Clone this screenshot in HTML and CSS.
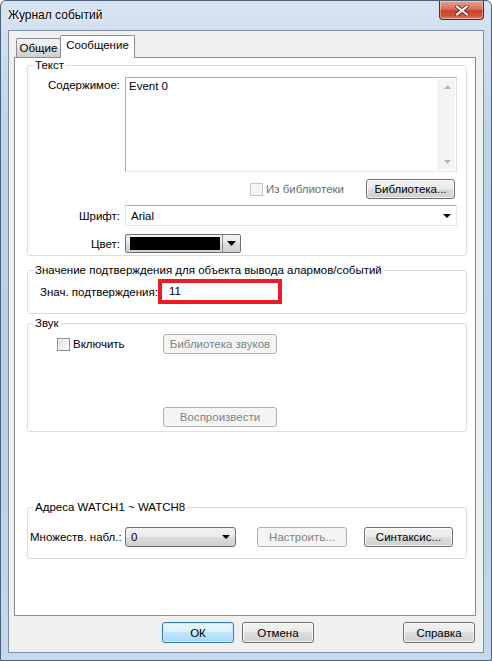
FILE: index.html
```html
<!DOCTYPE html>
<html lang="ru">
<head>
<meta charset="utf-8">
<title>Журнал событий</title>
<link rel="stylesheet" href="styles.css">
</head>
<body>
<div class="window">
  <div class="titlebar">
    <span class="title">Журнал событий</span>
    <div class="close">
      <svg width="14" height="11" viewBox="0 0 14 11"><path d="M2 1.5 L12 9.5 M12 1.5 L2 9.5" stroke="#5a1d12" stroke-width="3.6" stroke-linecap="square"/><path d="M2 1.5 L12 9.5 M12 1.5 L2 9.5" stroke="#fff" stroke-width="2.2" stroke-linecap="square"/></svg>
    </div>
  </div>
  <div class="client">
    <div class="tabs">
      <div class="tab">Общие</div>
      <div class="tab active">Сообщение</div>
    </div>
    <div class="page">
      <fieldset class="group g-text">
        <legend>Текст</legend>
        <div class="gbody">
          <div class="row row-content">
            <label class="lbl lbl-top">Содержимое:</label>
            <div class="textarea">
              <div class="ta-text">Event 0</div>
              <div class="vscroll">
                <svg width="7" height="4" viewBox="0 0 7 4"><path d="M0 4 L3.5 0 L7 4Z" fill="#b5b5b5"/></svg>
                <svg width="7" height="4" viewBox="0 0 7 4"><path d="M0 0 L3.5 4 L7 0Z" fill="#b5b5b5"/></svg>
              </div>
            </div>
          </div>
          <div class="row row-lib">
            <span class="check disabled"><span class="box"></span>Из библиотеки</span>
            <button class="btn btn-lib">Библиотека...</button>
          </div>
          <div class="row row-font">
            <label class="lbl">Шрифт:</label>
            <div class="select white">
              <span>Arial</span>
              <svg width="8" height="4" viewBox="0 0 8 4"><path d="M0 0 L8 0 L4 4Z" fill="#000"/></svg>
            </div>
          </div>
          <div class="row row-color">
            <label class="lbl">Цвет:</label>
            <div class="colorpick">
              <span class="swatch"></span>
              <span class="cp-arrow"><svg width="9" height="5" viewBox="0 0 9 5"><path d="M0 0 L9 0 L4.5 5Z" fill="#000"/></svg></span>
            </div>
          </div>
        </div>
      </fieldset>

      <fieldset class="group g-confirm">
        <legend>Значение подтверждения для объекта вывода алармов/событий</legend>
        <div class="gbody row">
          <label class="lbl-confirm">Знач. подтверждения:</label>
          <div class="redinput">11</div>
        </div>
      </fieldset>

      <fieldset class="group g-sound">
        <legend>Звук</legend>
        <div class="gbody sound-grid">
          <span class="check"><span class="box"></span>Включить</span>
          <button class="btn disabled btn-snd" disabled>Библиотека звуков</button>
          <span></span>
          <button class="btn disabled btn-play" disabled>Воспроизвести</button>
        </div>
      </fieldset>

      <fieldset class="group g-watch">
        <legend>Адреса WATCH1 ~ WATCH8</legend>
        <div class="gbody row">
          <label class="lbl-watch">Множеств. набл.:</label>
          <div class="select grey">
            <span>0</span>
            <svg width="8" height="4" viewBox="0 0 8 4"><path d="M0 0 L8 0 L4 4Z" fill="#000"/></svg>
          </div>
          <button class="btn disabled btn-setup" disabled>Настроить...</button>
          <button class="btn btn-syntax">Синтаксис...</button>
        </div>
      </fieldset>
    </div>
    <div class="buttons">
      <button class="btn btn-dlg default">ОК</button>
      <button class="btn btn-dlg">Отмена</button>
      <button class="btn btn-dlg btn-help">Справка</button>
    </div>
  </div>
</div>
</body>
</html>
```
FILE: styles.css
```css
* { box-sizing: border-box; }
html, body { margin: 0; padding: 0; }
body {
  width: 492px;
  height: 661px;
  overflow: hidden;
  font-family: "Liberation Sans", Arial, sans-serif;
  font-size: 11.5px;
  color: #000;
}
.window {
  width: 492px;
  height: 661px;
  border: 1px solid #4d6178;
  border-radius: 6px 6px 0 0;
  background: linear-gradient(180deg, #d7e4f2 0%, #bfd3e9 20%, #b9cfe6 60%, #c5d8ec 100%);
  display: flex;
  flex-direction: column;
}
.titlebar {
  height: 29px;
  display: flex;
  justify-content: space-between;
  align-items: flex-start;
  padding-left: 7px;
}
.title {
  margin-top: 7px;
  font-size: 12px;
  color: #000;
  text-shadow: 0 0 6px #fff, 0 0 3px #fff;
}
.close {
  width: 45px;
  height: 19px;
  margin-right: 7px;
  border: 1px solid #6a231b;
  border-top: none;
  border-radius: 0 0 4px 4px;
  background: linear-gradient(180deg, #e8a393 0%, #d8705c 45%, #c7412a 55%, #d0533a 80%, #e0896f 100%);
  box-shadow: inset 0 0 0 1px rgba(255,255,255,0.35);
  display: flex;
  align-items: center;
  justify-content: center;
}
.client {
  margin: 0 7px;
  height: 623px;
  border: 1px solid #7d8fa3;
  background: #f0f0f0;
  display: flex;
  flex-direction: column;
}
.tabs {
  height: 26px;
  display: flex;
  align-items: flex-end;
  padding-left: 7px;
}
.tab {
  height: 19px;
  border: 1px solid #898c95;
  border-bottom: none;
  border-radius: 2px 2px 0 0;
  background: linear-gradient(180deg, #f2f2f2 0%, #ebebeb 50%, #dddddd 51%, #cfcfcf 100%);
  line-height: 19px;
  width: 45px;
  text-align: center;
}
.tab.active {
  height: 23px;
  width: 75px;
  margin-left: -1px;
  margin-bottom: -1px;
  background: #fff;
  position: relative;
  z-index: 1;
  line-height: 19px;
}
.page {
  margin-left: 5px;
  width: 462px;
  height: 559px;
  border: 1px solid #898c95;
  background: #fff;
  padding: 0 8px 0 12px;
  display: flex;
  flex-direction: column;
}
.group {
  margin: 0;
  border: 1px solid #d5dfe5;
  border-radius: 3px;
  padding: 0;
  min-width: 0;
}
.group legend {
  padding: 0 2px;
  margin-left: 5px;
  line-height: 15px;
  white-space: nowrap;
}
.row { display: flex; align-items: center; }
.lbl {
  width: 97px;
  text-align: right;
  padding-right: 5px;
  white-space: nowrap;
}
.g-text { height: 198px; }
.g-text .gbody { padding: 4px 9px 0 0; }
.row-content { align-items: flex-start; }
.lbl-top { padding-top: 2px; }
.textarea {
  width: 332px;
  height: 95px;
  border: 1px solid #abadb3;
  border-right-color: #dbdfe6;
  border-bottom-color: #e3e9ef;
  display: flex;
}
.ta-text { flex: 1; padding: 2px 3px; }
.vscroll {
  width: 17px;
  margin: 1px;
  background: #f4f4f4;
  border-left: 1px solid #ececec;
  display: flex;
  flex-direction: column;
  justify-content: space-between;
  align-items: center;
  padding: 6px 0 6px;
}
.row-lib { margin-top: 7px; justify-content: flex-end; padding-right: 2px; }
.check { display: inline-flex; align-items: center; gap: 3px; white-space: nowrap; }
.check .box {
  width: 13px;
  height: 13px;
  border: 1px solid #8e8f8f;
  background: linear-gradient(135deg, #dcdcdc 0%, #f4f4f4 70%, #fff 100%);
  box-shadow: inset 0 0 0 1px #f4f4f4;
}
.check.disabled { color: #6d6d6d; margin-right: 22px; }
.check.disabled .box { border-color: #c4c4c4; background: #f4f4f4; box-shadow: none; }
.btn {
  font-family: inherit;
  font-size: 11.5px;
  color: #000;
  height: 20px;
  padding: 0;
  border: 1px solid #707070;
  border-radius: 3px;
  background: linear-gradient(180deg, #f2f2f2 0%, #ebebeb 48%, #dddddd 50%, #cfcfcf 100%);
  box-shadow: inset 0 0 0 1px rgba(255,255,255,0.7);
  line-height: 16px;
  white-space: nowrap;
}
.btn.disabled {
  border-color: #adb2b5;
  background: #f4f4f4;
  color: #838383;
  box-shadow: none;
}
.btn-lib { width: 89px; }
.row-font { margin-top: 6px; }
.select {
  height: 21px;
  display: flex;
  align-items: center;
  justify-content: space-between;
  padding: 0 5px 0 5px;
}
.select.white {
  width: 332px;
  border: 1px solid #e3e9ef;
  border-top-color: #abadb3;
  border-left-color: #e2e3ea;
  background: #fff;
}
.row-color { margin-top: 8px; }
.colorpick {
  width: 116px;
  height: 19px;
  border: 1px solid #707070;
  border-radius: 2px;
  background: linear-gradient(180deg, #f2f2f2 0%, #ebebeb 48%, #dddddd 50%, #cfcfcf 100%);
  display: flex;
  align-items: center;
  padding: 0 0 0 4px;
}
.swatch {
  width: 90px;
  height: 13px;
  background: #000;
}
.cp-arrow {
  margin-left: 2px;
  height: 17px;
  flex: 1;
  border-left: 1px solid #8a8a8a;
  display: flex;
  align-items: center;
  justify-content: center;
}
.g-confirm { margin-top: 7px; height: 51px; }
.g-confirm .gbody { padding: 1px 0 0 12px; }
.lbl-confirm { width: 118px; white-space: nowrap; }
.redinput {
  width: 124px;
  height: 25px;
  border: 4px solid #ed1c24;
  background: #fff;
  padding-left: 7px;
  line-height: 17px;
}
.g-sound { margin-top: 2px; height: 116px; }
.g-sound .gbody { padding: 3px 0 0 29px; }
.sound-grid {
  display: grid;
  grid-template-columns: 106px 114px;
  grid-template-rows: 20px 20px;
  row-gap: 53px;
  align-items: center;
}
.btn-snd, .btn-play { width: 114px; }
.g-watch { margin-top: auto; margin-bottom: 56px; height: 59px; }
.g-watch .gbody { padding: 12px 0 0 2px; }
.lbl-watch { width: 95px; white-space: nowrap; }
.select.grey {
  width: 111px;
  height: 20px;
  border: 1px solid #707070;
  border-radius: 3px;
  background: linear-gradient(180deg, #f2f2f2 0%, #ebebeb 48%, #dddddd 50%, #cfcfcf 100%);
}
.btn-setup { width: 90px; margin-left: 21px; }
.btn-syntax { width: 89px; margin-left: 17px; }
.buttons {
  display: flex;
  padding: 6px 0 0 153px;
}
.btn-dlg { width: 73px; height: 21px; margin-right: 8px; }
.btn-dlg.default {
  border-color: #3c7fb1;
  background: linear-gradient(180deg, #eaf6fd 0%, #d9f0fc 48%, #bee6fd 50%, #a7d9f5 100%);
  box-shadow: inset 0 0 0 1px #c7e8fa, 0 0 1px #8fd0f5;
}
.btn-help { margin-left: 81px; }
```
